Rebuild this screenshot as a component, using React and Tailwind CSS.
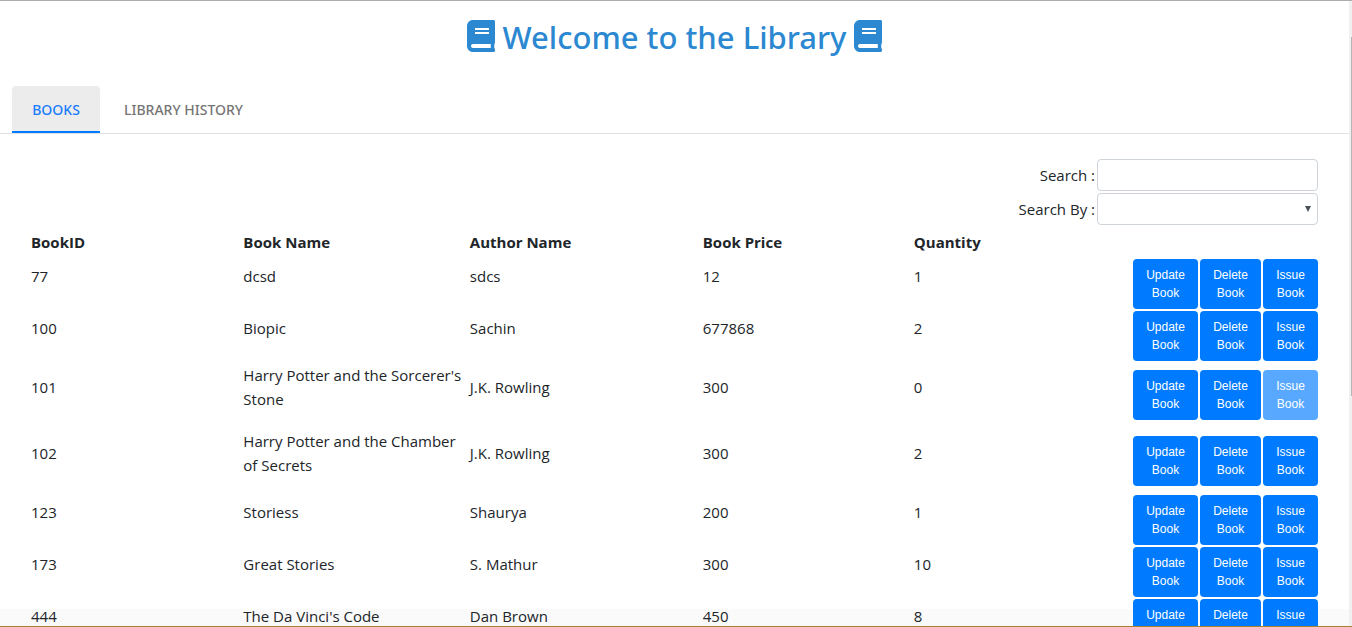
import { FaBook } from "react-icons/fa";

const books = [
  { id: "77", name: "dcsd", author: "sdcs", price: "12", quantity: 1 },
  { id: "100", name: "Biopic", author: "Sachin", price: "677868", quantity: 2 },
  { id: "101", name: "Harry Potter and the Sorcerer's Stone", author: "J.K. Rowling", price: "300", quantity: 0 },
  { id: "102", name: "Harry Potter and the Chamber of Secrets", author: "J.K. Rowling", price: "300", quantity: 2 },
  { id: "123", name: "Storiess", author: "Shaurya", price: "200", quantity: 1 },
  { id: "173", name: "Great Stories", author: "S. Mathur", price: "300", quantity: 10 },
  { id: "444", name: "The Da Vinci's Code", author: "Dan Brown", price: "450", quantity: 8 },
];

function ActionButton({ action, disabled }) {
  return (
    <button
      type="button"
      disabled={disabled}
      className="rounded bg-[#007bff] py-[7px] font-['Liberation_Sans',sans-serif] text-xs leading-[18px] font-medium text-white disabled:opacity-65"
    >
      {action}
      <br />
      Book
    </button>
  );
}

function BookRow({ book }) {
  return (
    <tr>
      <td className="py-px pb-[17px]">{book.id}</td>
      <td className="py-px pr-1 pb-[17px]">{book.name}</td>
      <td className="py-px pb-[17px]">{book.author}</td>
      <td className="py-px pb-[17px]">{book.price}</td>
      <td className="py-px pb-[17px]">{book.quantity}</td>
      <td className="py-px">
        <div className="grid grid-cols-[65px_61px_55px] justify-end gap-0.5">
          <ActionButton action="Update" />
          <ActionButton action="Delete" />
          <ActionButton action="Issue" disabled={book.quantity === 0} />
        </div>
      </td>
    </tr>
  );
}

export default function App() {
  return (
    <div className="flex h-screen flex-col overflow-hidden border-t border-b border-t-[#acacac] border-b-[#a9822f] bg-white font-['Open_Sans','Noto_Sans',sans-serif] text-[15px] leading-6 text-[#212529]">
      <div className="flex min-h-0 flex-1">
        <div className="relative min-w-0 flex-1 overflow-hidden">
          <div className="absolute inset-x-0 bottom-0 h-[17px] bg-[#fafafa]" />
          <div className="relative">
            <header className="flex items-start justify-center gap-2 pt-[19px] pb-[27px] text-[#2b88d1]">
              <FaBook className="h-8 w-7" />
              <h1 className="font-['Noto_Sans','Open_Sans',sans-serif] text-[31px] leading-[34px] font-medium">Welcome to the Library</h1>
              <FaBook className="h-8 w-7" />
            </header>
            <nav className="flex border-b border-[#dee2e6] px-3 pt-[5px] font-['Noto_Sans','Open_Sans',sans-serif] text-sm leading-6 font-medium">
              <a href="#books" aria-current="page" className="min-w-[88px] rounded-t-sm border-b-2 border-[#007bff] bg-[#ececec] px-5 pt-3 pb-[9px] text-center text-[#1a7cff]">
                BOOKS
              </a>
              <a href="#history" className="border-b-2 border-transparent px-6 pt-3 pb-[9px] text-[#757575]">
                LIBRARY HISTORY
              </a>
            </nav>
            <main className="pt-[25px] pr-[31px] pl-[31px]">
              <div className="flex flex-col items-end gap-0.5">
                <div className="flex items-center gap-0.5">
                  <label htmlFor="search">Search :</label>
                  <input id="search" type="text" className="h-8 w-[221px] rounded border border-[#ced4da] bg-white px-2" />
                </div>
                <div className="flex items-center gap-0.5">
                  <label htmlFor="search-by">Search By :</label>
                  <div className="relative flex">
                    <select id="search-by" defaultValue="" className="h-8 w-[221px] appearance-none rounded border border-[#ced4da] bg-white px-2">
                      <option value=""></option>
                      <option value="id">BookID</option>
                      <option value="name">Book Name</option>
                      <option value="author">Author Name</option>
                    </select>
                    <svg viewBox="0 0 6 6" className="pointer-events-none absolute top-[13px] right-[7px] size-1.5 fill-[#495057]" aria-hidden="true">
                      <path d="M0 0h6L3 6z" />
                    </svg>
                  </div>
                </div>
              </div>
              <table className="mt-[5px] w-full table-fixed border-collapse text-left">
                <thead>
                  <tr>
                    <th className="w-[16.5%] pb-1 font-bold">BookID</th>
                    <th className="w-[17.6%] pb-1 font-bold">Book Name</th>
                    <th className="w-[18.1%] pb-1 font-bold">Author Name</th>
                    <th className="w-[16.4%] pb-1 font-bold">Book Price</th>
                    <th className="w-[17%] pb-1 font-bold">Quantity</th>
                    <td className="w-[14.4%] pb-1" />
                  </tr>
                </thead>
                <tbody>
                  {books.map((book) => (
                    <BookRow key={book.id} book={book} />
                  ))}
                </tbody>
              </table>
            </main>
          </div>
        </div>
        <div className="flex w-[3px] justify-end bg-[#f0f0f0] pt-9" aria-hidden="true">
          <div className="h-[61%] w-px bg-[#b5b5b5]" />
        </div>
      </div>
    </div>
  );
}
